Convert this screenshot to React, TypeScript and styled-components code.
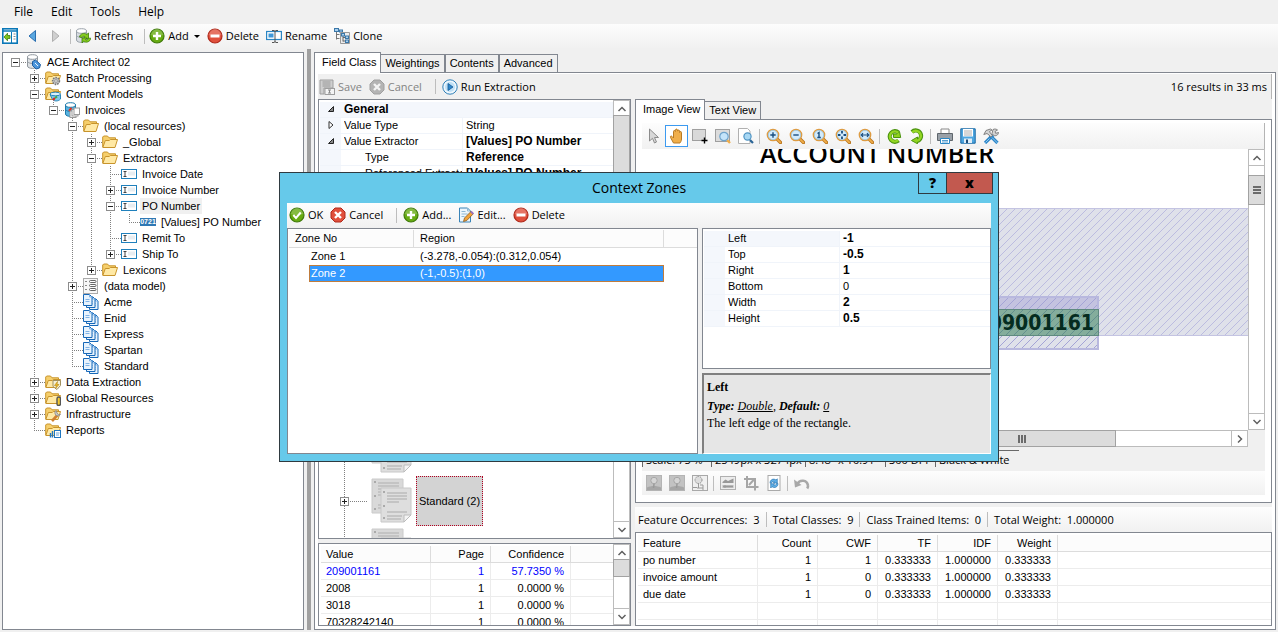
import React from "react";
import styled, { createGlobalStyle, css } from "styled-components";

const ui = '"Open Sans", "Noto Sans", sans-serif';
const grid = '"Liberation Sans", Arial, sans-serif';

const Global = createGlobalStyle`
  *, *::before, *::after { box-sizing: border-box; }
  html, body, #root { height: 100%; }
  body { margin: 0; background: #f0f0f0; color: #000; font: 11px/16px ${grid}; overflow: hidden; }
  button { font: inherit; color: inherit; background: none; border: 0; padding: 0; margin: 0; }
  table { border-collapse: separate; border-spacing: 0; table-layout: fixed; }
  th { font-weight: normal; text-align: left; }
  th, td { padding: 0; white-space: nowrap; overflow: hidden; }
`;

/* ---------- icons ---------- */

const Doc = ({ x = 0, y = 0 }: { x?: number; y?: number }) => (
  <g transform={`translate(${x} ${y})`}>
    <path d="M.5.5h6l2.5 2.5v8.500h-8.500z" fill="#e8f3fd" stroke="#1768b8" />
    <path d="M6.500.5v2.500h2.500M2.500 5.500h4M2.500 7.500h4" fill="none" stroke="#7fb2e5" />
  </g>
);
const FolderShape = () => (
  <>
    <path d="M.7 13V3l1-1h3.800l1.500 1.800h6.500V7" fill="#f6cf6c" stroke="#c8942c" />
    <path d="M.8 13.500l2.500-7h4l1-1h7.200l-2.500 8z" fill="#ffe9a5" stroke="#c8942c" />
  </>
);
const Lens = ({ children }: { children?: React.ReactNode }) => (
  <>
    <path d="M10.500 10.500l4 4" stroke="#b8741c" strokeWidth="3.400" strokeLinecap="round" />
    <path d="M10.800 10.800l3.500 3.500" stroke="#f0ae4a" strokeWidth="1.800" strokeLinecap="round" />
    <circle cx="7" cy="7" r="5.600" fill="#d3ebfb" stroke="#e09a3c" strokeWidth="1.500" />
    <circle cx="7" cy="7" r="4.700" fill="none" stroke="#8fc4ea" strokeWidth=".7" />
    <g stroke="#174d80" strokeWidth="1.400" fill="none">{children}</g>
  </>
);
const Disc = ({ fill, edge, children }: { fill: string; edge: string; children: React.ReactNode }) => (
  <>
    <circle cx="8" cy="8" r="7" fill={fill} stroke={edge} strokeWidth="1.200" />
    <path d="M2 7a6 6 0 0 1 12 0q-6 2.500-12 0z" fill="#fff" opacity=".2" />
    {children}
  </>
);
const Cylinder = ({ fill, edge }: { fill: string; edge: string }) => (
  <>
    <path d="M1.500 3v9c0 3.200 10 3.200 10 0V3" fill={fill} stroke={edge} />
    <ellipse cx="6.500" cy="3" rx="5" ry="2.300" fill="#fff" stroke={edge} />
    <path d="M1.500 7.500c1.500 2.600 8.500 2.600 10 0" fill="none" stroke={edge} />
  </>
);
const Picture = () => (
  <>
    <rect x=".5" y=".5" width="15" height="15" fill="#c2c2c2" stroke="#b4b4b4" />
    <path d="M1 12.500c4-2 10-2 14 0V15H1z" fill="#a6a6a6" />
    <path d="M7.500 13l.5-4" stroke="#999" strokeWidth="1.500" />
    <circle cx="8" cy="5.500" r="3.200" fill="#d5d5d5" stroke="#a6a6a6" />
  </>
);

const icons: Record<string, React.ReactNode> = {
  pane: (
    <>
      <rect x=".8" y=".8" width="14.400" height="14.400" fill="#fff" stroke="#0a78b8" strokeWidth="1.600" />
      <path d="M1 3h14" stroke="#0a78b8" strokeWidth="1.500" />
      <path d="M9.500 4v11" stroke="#0a78b8" />
      <path d="M11.500 6h2M11.500 8.500h2M11.500 11h2" stroke="#888" />
      <path d="M2 9l3.500-3.800v2.300H8v3H5.500v2.300z" fill="#7fc41c" stroke="#3f7d0c" strokeWidth=".8" />
    </>
  ),
  back: <path d="M10.500 2.500v11L4 8z" fill="#5aa7e0" stroke="#2b6fb0" />,
  forward: <path d="M4.500 2.500v11L11 8z" fill="#cfcfcf" stroke="#b0b0b0" />,
  refresh: (
    <>
      <Cylinder fill="#d8dde2" edge="#9aa2aa" />
      <path d="M4.500 9c.5-3.500 5-4.700 7.200-2.500L13.500 5v5.500H8.200L10 8.700c-1-.8-2.500-.4-3 .8z" fill="#86cc1e" stroke="#3c7d0a" strokeWidth=".8" />
      <path d="M15.800 10.200c-.5 3.800-5 5-7.200 3L7 15v-5h5l-1.600 1.700c1 .8 2.500.2 3-1.500z" fill="#86cc1e" stroke="#3c7d0a" strokeWidth=".8" />
    </>
  ),
  add: (
    <Disc fill="#67ab12" edge="#3f7a0a">
      <path d="M8 4v8M4 8h8" stroke="#fff" strokeWidth="2.400" />
    </Disc>
  ),
  remove: (
    <Disc fill="#e0503c" edge="#b02a1c">
      <path d="M3.500 8h9" stroke="#fff" strokeWidth="3" />
    </Disc>
  ),
  ok: (
    <Disc fill="#67ab12" edge="#3f7a0a">
      <path d="M4.300 8l2.700 3 4.700-5.500" stroke="#fff" strokeWidth="2" fill="none" />
    </Disc>
  ),
  cancel: (
    <>
      <path d="M5 1h6l4 4v6l-4 4H5l-4-4V5z" fill="#e0503c" stroke="#b02a1c" />
      <path d="M5 5l6 6M11 5l-6 6" stroke="#fff" strokeWidth="2.400" />
    </>
  ),
  cancelOff: (
    <>
      <path d="M5 1h6l4 4v6l-4 4H5l-4-4V5z" fill="#b4b4b4" stroke="#a0a0a0" />
      <path d="M5 5l6 6M11 5l-6 6" stroke="#f4f4f4" strokeWidth="2.400" />
    </>
  ),
  rename: (
    <>
      <rect x=".6" y="3.500" width="14.800" height="8" fill="#fff" stroke="#2b86c4" strokeWidth="1.200" />
      <rect x="2.500" y="5.500" width="5" height="4" fill="#3f97d8" />
      <path d="M6 2.500h2l1 .8 1-.8h2M6 14.500h2l1-.8 1 .8h2M9 3v11" stroke="#555" fill="none" />
    </>
  ),
  clone: (
    <>
      <path d="M2.500 3v8.500M2.500 6.500h3M2.500 10.500h3" stroke="#777" fill="none" />
      <rect x=".5" y=".5" width="4" height="3" fill="#a9d0ef" stroke="#3a77a8" />
      <rect x="5.500" y="2" width="3" height="2" fill="#a9d0ef" stroke="#3a77a8" />
      <path d="M6.500 4.500h9v11h-9z" fill="#ececec" stroke="#999" />
      <path d="M9 7v6.500M9 9.500h3M9 13h3" stroke="#666" fill="none" />
      <rect x="7.500" y="5.500" width="3" height="2.500" fill="#a9d0ef" stroke="#3a77a8" />
      <rect x="11.500" y="8" width="3" height="2.500" fill="#a9d0ef" stroke="#3a77a8" />
      <rect x="11.500" y="12" width="3" height="2.500" fill="#a9d0ef" stroke="#3a77a8" />
    </>
  ),
  edit: (
    <>
      <path d="M1.500 1h8l3 3v11h-11z" fill="#eef6fc" stroke="#3a84b8" />
      <path d="M9.500 1v3h3M3.500 4.500h4M3.500 7h6M3.500 9.500h3" fill="none" stroke="#8fb8d4" />
      <path d="M5.500 14.500l1-3.500 6.500-6.500 2.300 2.300L8.800 13.500z" fill="#f2a33a" stroke="#8c5a1c" strokeWidth=".8" />
      <path d="M13 4.500l2.300 2.300" stroke="#9a6fc0" strokeWidth="1.800" />
    </>
  ),
  saveOff: (
    <>
      <path d="M1 1h13v8H5v6H1z" fill="#cfcfcf" stroke="#9e9e9e" />
      <path d="M3.500 3h8M3.500 5h8M3.500 7h8" stroke="#999" />
      <rect x="6" y="9.500" width="9.500" height="6" fill="#f4f4f4" stroke="#9e9e9e" />
      <path d="M9 11h3M9 14h3M10.500 11v3" stroke="#8a8a8a" />
    </>
  ),
  run: (
    <>
      <circle cx="8" cy="8" r="7.200" fill="#eef7fd" stroke="#2f80b8" />
      <circle cx="8" cy="8" r="5" fill="#bfe0f6" />
      <path d="M6 4.500v7L11 8z" fill="#2d86cc" stroke="#145a94" strokeWidth=".8" />
    </>
  ),
  server: (
    <>
      <Cylinder fill="#dfe2e5" edge="#90979e" />
      <path d="M6.500 7.500l3-1.500 5 4.500-1 3.500-3.500 1-3.500-3.500z" fill="#4c96dc" stroke="#1d5da0" />
      <path d="M13 7l2.500 2.500M9 9l3 3" stroke="#e8f2fb" />
    </>
  ),
  folder: <FolderShape />,
  folderGear: (
    <>
      <FolderShape />
      <circle cx="11" cy="11" r="3.400" fill="#c4c4c4" stroke="#777" strokeWidth="1.600" strokeDasharray="1.500 1" />
      <circle cx="11" cy="11" r="1.300" fill="#fff" stroke="#777" strokeWidth=".7" />
    </>
  ),
  folderModel: (
    <>
      <FolderShape />
      <path d="M5 8.500h10.500v4.500c-2 2.500-6 2.500-8 .5z" fill="#7cc8ec" stroke="#2b86b8" />
      <ellipse cx="10.300" cy="8" rx="5.200" ry="1.800" fill="#d8f0fa" stroke="#2b86b8" />
      <path d="M8 14l1.800-2" stroke="#d22" strokeWidth="2" />
      <path d="M10 12l2-1.500" stroke="#4a4" strokeWidth="2" />
    </>
  ),
  folderShield: (
    <>
      <FolderShape />
      <path d="M8 6.500h7.500v5l-3.500 4-4-3z" fill="#f4f0d8" stroke="#a09060" />
      <path d="M12.500 7.500L9.500 11.500h2l-1 3 3.500-4h-2z" fill="#f4c020" stroke="#b08010" strokeWidth=".6" />
    </>
  ),
  folderClip: (
    <>
      <FolderShape />
      <rect x="12" y="7" width="3.500" height="8.500" rx="1.700" fill="#f4c92e" stroke="#555" strokeWidth="1.400" />
    </>
  ),
  folderWrench: (
    <>
      <FolderShape />
      <path d="M7 15l5.500-6" stroke="#d08030" strokeWidth="2.600" />
      <path d="M11 4.500a3 3 0 1 0 4.500 3.800l-2 .5-1.500-1.800z" fill="#ccc" stroke="#888" strokeWidth=".8" />
    </>
  ),
  folderReport: (
    <>
      <FolderShape />
      <rect x="9.500" y="8.500" width="6" height="7" fill="#fff" stroke="#1f76c0" />
      <path d="M5.500 11v4.500M7.500 9v6.500" stroke="#1f76c0" strokeWidth="1.400" />
      <path d="M11 11h3.500M11 13h3" stroke="#6aa8dc" />
    </>
  ),
  model: (
    <>
      <Cylinder fill="#59b3e0" edge="#1c7aac" />
      <path d="M5 9l2.500-3" stroke="#e03020" strokeWidth="2" />
      <rect x="6" y="9" width="6" height="6.500" fill="#fff" stroke="#999" />
      <rect x="8" y="7.500" width="6" height="6.500" fill="#fff" stroke="#999" />
      <rect x="10" y="6" width="5.500" height="6.500" fill="#fff" stroke="#999" />
    </>
  ),
  field: (
    <>
      <rect x=".5" y="3.500" width="15" height="9" fill="#fff" stroke="#1f80bc" />
      <rect x="7" y="5.500" width="7" height="4" fill="#e8edf1" />
      <path d="M2.500 5.500h3M2.500 10.500h3M4 5.500v5" stroke="#444" />
    </>
  ),
  pages: (
    <>
      <Doc x={6} y={4} />
      <Doc x={3} y={2} />
      <Doc />
    </>
  ),
  dataModel: (
    <>
      <rect x=".5" y=".5" width="14" height="15" fill="#f7f7f7" stroke="#aaa" />
      <path d="M2 3.500h2M2 7.500h2M2 11.500h2" stroke="#888" />
      <rect x="6.500" y="2.500" width="6.500" height="2" rx="1" fill="#fff" stroke="#666" />
      <rect x="6.500" y="6.500" width="6.500" height="2" rx="1" fill="#fff" stroke="#666" />
      <rect x="6.500" y="10.500" width="6.500" height="2" rx="1" fill="#fff" stroke="#666" />
    </>
  ),
  pointer: <path d="M3.500 1v12l3-2.700 2 4.700 2-1-2-4.500h4z" fill="#d8d8d8" stroke="#8c8c8c" />,
  hand: (
    <path
      d="M4.500 15L1.500 9.500c-.6-1.300.8-2 1.700-.9L4.500 10V3.500c0-1.400 1.800-1.400 1.900 0V2.200c.1-1.500 2-1.500 2.100 0v.9c.1-1.400 2-1.400 2.100 0v1.400c.1-1.300 1.900-1.300 1.900 0V11c0 2-1 3-1.500 4z"
      fill="#f0ae4a" stroke="#b87a24"
    />
  ),
  select: (
    <>
      <rect x=".5" y="1.500" width="13" height="11" fill="#d9d9d9" stroke="#555" strokeDasharray="1 1" />
      <path d="M9.500 12.500h6M12.500 9.500v6" stroke="#000" strokeWidth="1.400" />
    </>
  ),
  zoomArea: (
    <>
      <rect x=".5" y="1.500" width="14" height="12" fill="#dcdcdc" stroke="#555" strokeDasharray="1 1" />
      <path d="M12 12l3 3" stroke="#f0ae4a" strokeWidth="2.400" />
      <circle cx="9" cy="8.500" r="4.200" fill="#c4e4fa" stroke="#6fa4cc" strokeWidth="1.200" />
    </>
  ),
  zoomPage: (
    <>
      <path d="M.5.5h9l2.500 2.500v12.500H.5z" fill="#fff" stroke="#b0b0b0" />
      <path d="M12 12l3 3" stroke="#2a6496" strokeWidth="2.200" />
      <circle cx="9.500" cy="8.500" r="3.600" fill="#a8d8f4" stroke="#4f94c4" strokeWidth="1.200" />
    </>
  ),
  zoomIn: <Lens><path d="M4.300 7h5.400M7 4.300v5.400" /></Lens>,
  zoomOut: <Lens><path d="M4.300 7h5.400" /></Lens>,
  zoomOne: <Lens><path d="M5.500 5.500L7 4.500v5M5.300 9.500h3.500" /></Lens>,
  zoomFit: <Lens><path d="M3 7h2.500M8.500 7H11M7 3v2.500M7 8.500V11" strokeWidth="1.800" /></Lens>,
  zoomWidth: <Lens><path d="M3.500 7h7M5 5.200L3.300 7 5 8.800M9 5.200L10.700 7 9 8.800" strokeWidth="1.200" /></Lens>,
  rotateLeft: (
    <>
      <path d="M12.500 12.500a5.300 5.300 0 1 1 0-8" fill="none" stroke="#4b930f" strokeWidth="4.200" />
      <path d="M7.500 9.500V6h3l3-2.500 1.200 6z" fill="#8ed21e" stroke="#4b930f" />
      <path d="M12.200 12.200a5 5 0 1 1 0-7.500" fill="none" stroke="#93d624" strokeWidth="2.400" />
    </>
  ),
  rotateRight: (
    <>
      <path d="M3 4a5.300 5.300 0 1 1 4.500 9" fill="none" stroke="#4b930f" strokeWidth="4.200" />
      <path d="M8.500 9v6.800L2.500 12.500z" fill="#8ed21e" stroke="#4b930f" />
      <path d="M3.300 4.300a5 5 0 1 1 4.500 8.400" fill="none" stroke="#93d624" strokeWidth="2.400" />
    </>
  ),
  print: (
    <>
      <path d="M4 1h8v5H4z" fill="#fff" stroke="#888" />
      <path d="M.5 5.500h15v7H.5z" fill="#9aa1a8" stroke="#5f666c" />
      <path d="M3.500 10.500h9v5h-9z" fill="#fff" stroke="#2b86c4" />
      <path d="M5 12.500h6M5 14h6" stroke="#2b86c4" strokeWidth=".8" />
    </>
  ),
  save: (
    <>
      <path d="M.8.8h14.400v14.400H.8z" fill="#4da6e0" stroke="#1767a4" />
      <path d="M3 1h10v7.500H3z" fill="#fff" />
      <path d="M4 3h8M4 5h8M4 7h8" stroke="#999" strokeWidth=".8" />
      <path d="M4 10.500h8V15H4z" fill="#e0eef8" />
      <path d="M6 11.500h2V15H6z" fill="#1d4d78" />
    </>
  ),
  tools: (
    <>
      <path d="M2 15l8-8" stroke="#2c86c8" strokeWidth="3.200" />
      <path d="M14.500 15L7 7.500" stroke="#2c86c8" strokeWidth="3.200" />
      <path d="M14.500 15L9 9.500M2.500 14.500l4-4" stroke="#8ecbf2" />
      <path d="M.8 6.500L3 2.500l4.500-1.500 1.500 1-2.500 1.500 1 1.800 2 2.200-1.800 1.500L6 7 4 5.500z" fill="#d4d4d4" stroke="#777" strokeWidth=".9" />
      <path d="M10 1.500c2-1 3.800-.2 4.500.5l-2.500 1.500.7 1.800 2.800-.8c0 2.500-3 4-5 2.800L9 5.500z" fill="#d4d4d4" stroke="#777" strokeWidth=".9" />
    </>
  ),
  picture: <Picture />,
  pictureOutline: (
    <>
      <rect x=".5" y=".5" width="15" height="15" fill="#f0f0f0" stroke="#a8a8a8" />
      <circle cx="6.500" cy="5" r="3.500" fill="#ddd" stroke="#888" strokeDasharray="1.500 1" />
      <path d="M6.500 8v5M1 12.500h4M5 13h6v2M8 10h3v3" stroke="#999" fill="none" />
    </>
  ),
  levels: (
    <>
      <rect x=".5" y="1.500" width="15" height="13" fill="#ededed" stroke="#b0b0b0" />
      <path d="M2.500 7l3-2.500L8 6l5.500-2.500V8h-11z" fill="#999" />
      <path d="M2.500 10h11v3h-11z" fill="#b8b8b8" />
      <path d="M3 11.500h10M5 10v3" stroke="#999" />
    </>
  ),
  crop: <path d="M4 1v11h11.500M1 4h11v11.500M6 10l5-5.500" fill="none" stroke="#a6a6a6" strokeWidth="2" />,
  reload: (
    <>
      <rect x="2" y=".5" width="12" height="15" fill="#fff" stroke="#aaa" />
      <path d="M4 8.200C4 4.500 7.500 3 10 5l1.300-1.200V8H7.200l1.300-1.300C7 6 5.800 6.800 5.600 8.200z" fill="#5fb0e8" stroke="#1d6aa8" strokeWidth=".6" />
      <path d="M12 8.500c0 3.700-3.500 5-6 3.200l-1.300 1.300V8.800h4.100L7.500 10c1.500.8 2.700 0 2.900-1.500z" fill="#5fb0e8" stroke="#1d6aa8" strokeWidth=".6" />
    </>
  ),
  undo: (
    <>
      <path d="M3.500 9c2-4.500 9.500-4.500 10.500 1.500.2 1-.2 2-.8 3" fill="none" stroke="#a8a8a8" strokeWidth="2.600" />
      <path d="M0 4.500l1 8 6.500-2.500z" fill="#a8a8a8" />
    </>
  ),
};

const Svg = styled.svg`
  width: 16px;
  height: 16px;
  flex: none;
  display: block;
`;
const NumberBadge = styled.span`
  width: 16px;
  height: 8px;
  flex: none;
  overflow: hidden;
  background: #2f78b4;
  color: #fff;
  font: bold 7px/8px ${grid};
  text-align: center;
`;
const Icon = ({ name }: { name: string }) =>
  name === "digits" ? (
    <NumberBadge>0721</NumberBadge>
  ) : (
    <Svg viewBox="0 0 16 16" aria-hidden="true">{icons[name]}</Svg>
  );

/* ---------- shared parts ---------- */

const Shell = styled.div`
  height: 100%;
  display: flex;
  flex-direction: column;
`;
const MenuBar = styled.nav`
  display: flex;
  height: 24px;
  padding-left: 5px;
  font: 12px/24px ${ui};
`;
const MenuItem = styled.button`
  padding: 0 9px;
`;
const Bar = styled.div<{ $flat?: boolean; $h?: number }>`
  display: flex;
  align-items: center;
  flex: none;
  height: ${(p) => p.$h ?? 24}px;
  font: 11px/16px ${ui};
  background: ${(p) => (p.$flat ? "#f0f0f0" : "linear-gradient(#fdfdfd, #f1f1f1)")};
`;
const MainBar = styled(Bar)`
  padding-left: 2px;
`;
const ToolButton = styled.button<{ $w?: number }>`
  display: flex;
  align-items: center;
  gap: 3px;
  height: 22px;
  width: ${(p) => (p.$w ? `${p.$w}px` : "auto")};
  padding-right: 7px;
  white-space: nowrap;
  &:disabled { color: #838383; }
`;
const Divider = styled.span<{ $gap?: number }>`
  width: 1px;
  height: 15px;
  margin: 0 ${(p) => p.$gap ?? 6}px;
  background: #bdbdbd;
  flex: none;
`;
const Caret = styled.i`
  border: 3px solid transparent;
  border-top-color: #000;
  border-bottom: 0;
  margin-left: 2px;
`;
const IconButton = styled.button<{ $on?: boolean }>`
  width: 23px;
  height: 22px;
  display: grid;
  place-items: center;
  flex: none;
  ${(p) => p.$on && css`border: 1px solid #3c9af0; background: #fff;`}
`;

/* ---------- scroll bars ---------- */

const Track = styled.div<{ $across?: boolean }>`
  display: flex;
  flex: none;
  flex-direction: ${(p) => (p.$across ? "row" : "column")};
  ${(p) => (p.$across ? "height: 17px;" : "width: 17px;")}
  background: #fff;
  border: 1px solid #bcbcbc;
`;
const Arrow = styled.button`
  width: 15px;
  height: 15px;
  flex: none;
  display: grid;
  place-items: center;
  outline: 1px solid #bcbcbc;
  background: #fff;
`;
const Lane = styled.div<{ $across?: boolean }>`
  flex: 1;
  min-height: 0;
  min-width: 0;
  display: flex;
  flex-direction: ${(p) => (p.$across ? "row" : "column")};
`;
const Thumb = styled.div<{ $size: string; $start: number; $across?: boolean }>`
  flex: none;
  display: grid;
  place-items: center;
  background: #dcdcdc;
  outline: 1px solid #a2a2a2;
  ${(p) =>
    p.$across
      ? css`width: ${p.$size}; margin-left: ${p.$start}px;`
      : css`height: ${p.$size}; margin-top: ${p.$start}px;`}
`;
const Grip = styled.i<{ $across?: boolean }>`
  width: 8px;
  height: 8px;
  background: repeating-linear-gradient(${(p) => (p.$across ? "90deg" : "180deg")}, #6b6b6b 0 2px, transparent 2px 3px);
`;
const turns = { up: 0, right: 90, down: 180, left: 270 };
const ScrollArrow = ({ dir }: { dir: keyof typeof turns }) => (
  <Arrow aria-label={`Scroll ${dir}`}>
    <svg width="10" height="10" viewBox="0 0 10 10">
      <path d="M1.500 7L5 3.500 8.500 7" fill="none" stroke="#606060" strokeWidth="1.500" transform={`rotate(${turns[dir]} 5 5)`} />
    </svg>
  </Arrow>
);
const ScrollBar = (p: { across?: boolean; start?: number; size?: string; grip?: boolean }) => (
  <Track $across={p.across}>
    <ScrollArrow dir={p.across ? "left" : "up"} />
    <Lane $across={p.across}>
      {p.size && (
        <Thumb $across={p.across} $start={p.start ?? 0} $size={p.size}>
          {p.grip && <Grip $across={p.across} />}
        </Thumb>
      )}
    </Lane>
    <ScrollArrow dir={p.across ? "right" : "down"} />
  </Track>
);

/* ---------- project tree ---------- */

type Node = { label: string; icon: string; open?: boolean; selected?: boolean; kids?: Node[] };
const root: Node = {
  label: "ACE Architect 02", icon: "server", open: true,
  kids: [
    { label: "Batch Processing", icon: "folderGear", kids: [] },
    {
      label: "Content Models", icon: "folderModel", open: true,
      kids: [
        {
          label: "Invoices", icon: "model", open: true,
          kids: [
            {
              label: "(local resources)", icon: "folder", open: true,
              kids: [
                { label: "_Global", icon: "folder", kids: [] },
                {
                  label: "Extractors", icon: "folder", open: true,
                  kids: [
                    { label: "Invoice Date", icon: "field" },
                    { label: "Invoice Number", icon: "field", kids: [] },
                    {
                      label: "PO Number", icon: "field", open: true, selected: true,
                      kids: [{ label: "[Values] PO Number", icon: "digits" }],
                    },
                    { label: "Remit To", icon: "field" },
                    { label: "Ship To", icon: "field", kids: [] },
                  ],
                },
                { label: "Lexicons", icon: "folder", kids: [] },
              ],
            },
            { label: "(data model)", icon: "dataModel", kids: [] },
            ...["Acme", "Enid", "Express", "Spartan", "Standard"].map((label) => ({ label, icon: "pages" })),
          ],
        },
      ],
    },
    { label: "Data Extraction", icon: "folderShield", kids: [] },
    { label: "Global Resources", icon: "folderClip", kids: [] },
    { label: "Infrastructure", icon: "folderWrench", kids: [] },
    { label: "Reports", icon: "folderReport" },
  ],
};

const TreePane = styled.section`
  background: #fff;
  border: 1px solid #828790;
  padding: 1px 0 0 3px;
  overflow: hidden;
`;
const TreeRow = styled.div`
  display: flex;
  align-items: center;
  height: 16px;
`;
const dotsDown = "repeating-linear-gradient(#808080 0 1px, transparent 1px 2px)";
const dotsAcross = "repeating-linear-gradient(90deg, #808080 0 1px, transparent 1px 2px)";
const Guide = styled.span<{ $line?: "full" | "half" | "none"; $stub?: boolean }>`
  width: ${(p) => (p.$stub ? 20 : 19)}px;
  padding-right: ${(p) => (p.$stub ? 1 : 0)}px;
  height: 16px;
  flex: none;
  display: grid;
  place-items: center;
  background:
    ${(p) => (p.$stub ? dotsAcross : "none")} 9px 8px / 11px 1px no-repeat,
    ${(p) => (p.$line && p.$line !== "none" ? dotsDown : "none")} 9px 0 / 1px ${(p) => (p.$line === "half" ? 8 : 16)}px no-repeat;
`;
const Expander = styled.button`
  width: 9px;
  height: 9px;
  display: grid;
  place-items: center;
  border: 1px solid #8c8c8c;
  background: #fff;
`;
const TreeLabel = styled.span<{ $selected?: boolean }>`
  margin-left: 3px;
  padding: 0 2px;
  background: ${(p) => (p.$selected ? "#f0f0f0" : "none")};
  white-space: nowrap;
`;
const PlusMinus = ({ open }: { open?: boolean }) => (
  <Expander aria-label={open ? "Collapse" : "Expand"}>
    <svg width="5" height="5" viewBox="0 0 5 5">
      <path d={open ? "M0 2.500h5" : "M0 2.500h5M2.500 0v5"} stroke="#222" />
    </svg>
  </Expander>
);
const Branch = ({ node, trail, last, top }: { node: Node; trail: boolean[]; last: boolean; top?: boolean }) => (
  <>
    <TreeRow role="treeitem" aria-selected={!!node.selected}>
      {trail.map((on, i) => <Guide key={i} $line={on ? "full" : "none"} />)}
      <Guide $stub $line={top ? "none" : last ? "half" : "full"}>
        {node.kids && <PlusMinus open={node.open} />}
      </Guide>
      <Icon name={node.icon} />
      <TreeLabel $selected={node.selected}>{node.label}</TreeLabel>
    </TreeRow>
    {node.open && node.kids?.map((kid, i, all) => (
      <Branch key={kid.label} node={kid} trail={[...trail, !last]} last={i === all.length - 1} />
    ))}
  </>
);

/* ---------- work area ---------- */

const Body = styled.main`
  flex: 1;
  min-height: 0;
  display: grid;
  grid-template-columns: 302px 4px 1fr;
  gap: 3px;
  padding: 0 2px 2px;
  > :first-child, > :last-child { margin-top: 4px; }
`;
const Splitter = styled.div`
  background: #a0a0a0;
  margin-top: 1px;
`;
const TabBox = styled.section`
  display: flex;
  flex: 1;
  flex-direction: column;
  min-width: 0;
  min-height: 0;
`;
const TabStrip = styled.div`
  display: flex;
  align-items: flex-end;
  height: 20px;
  flex: none;
  position: relative;
`;
const Tab = styled.button<{ $active?: boolean }>`
  height: ${(p) => (p.$active ? 21 : 18)}px;
  margin-bottom: ${(p) => (p.$active ? -1 : 0)}px;
  padding: ${(p) => (p.$active ? "0 4px 2px 7px" : "0 4px")};
  border: 1px solid #828790;
  border-bottom: 0;
  background: ${(p) => (p.$active ? "#fff" : "#f0f0f0")};
  line-height: 17px;
  white-space: nowrap;
  & + & { border-left-width: 0; }
  & + & + & { border-left-width: 1px; }
`;
const TabPage = styled.div<{ $pad: string }>`
  flex: 1;
  min-height: 0;
  display: flex;
  flex-direction: column;
  background: #fff;
  border: 1px solid #828790;
  padding: ${(p) => p.$pad};
`;
const FieldBar = styled(Bar)`
  padding: 0 4px 0 1px;
  border-right: 1px solid #b4b4b4;
`;
const Spacer = styled.span`
  flex: 1;
`;
const Columns = styled.div`
  flex: 1;
  min-height: 0;
  display: grid;
  grid-template-columns: 313px 1fr;
  gap: 4px;
  background: #f0f0f0;
`;
const Column = styled.div`
  display: flex;
  flex-direction: column;
  min-height: 0;
  min-width: 0;
  gap: 4px;
`;
const Box = styled.div<{ $h?: number }>`
  display: flex;
  justify-content: space-between;
  background: #fff;
  border: 1px solid #828790;
  overflow: hidden;
  ${(p) => (p.$h ? `flex: none; height: ${p.$h}px;` : "flex: 1; min-height: 0;")}
`;
const Scroller = styled.div<{ $pad?: string }>`
  flex: 1;
  min-width: 0;
  overflow: hidden;
  padding: ${(p) => p.$pad ?? "0"};
`;

const PropTable = styled.table`
  width: 100%;
  tr { height: 16px; }
  td, th { border-bottom: 1px solid #f0f4fa; line-height: 15px; height: 16px; }
  th { border-right: 1px solid #f0f4fa; padding-left: 3px; }
  td:first-child { background: #f4f7fc; text-align: center; }
  td:last-child { padding-left: 3px; }
`;
const PropName = styled.th<{ $indent?: boolean; $lit?: boolean }>`
  ${(p) => p.$lit && "background: #f4f7fc;"}
  span { display: block; overflow: hidden; padding-left: ${(p) => (p.$indent ? 21 : 0)}px; }
`;
const PropValue = styled.td<{ $bold?: boolean }>`
  font-weight: ${(p) => (p.$bold ? "bold" : "normal")};
  font-size: ${(p) => (p.$bold ? 12 : 11)}px;
`;
const GroupName = styled.th`
  && { font: bold 12px/15px ${grid}; background: #f4f7fc; }
`;
const Twisty = ({ open }: { open?: boolean }) => (
  <svg width="8" height="8" viewBox="0 0 8 8" aria-hidden="true">
    {open ? <path d="M6.500 1.500v5h-5z" fill="#888" stroke="#222" /> : <path d="M2 .5v7L6 4z" fill="#fff" stroke="#333" />}
  </svg>
);

const DataTable = styled.table`
  width: 100%;
  height: 0;
  line-height: 16px;
  tr { height: 17px; }
  th, td { height: 17px; border-right: 1px solid #ececec; border-bottom: 1px solid #ececec; text-align: right; padding: 0 6px; }
  thead th { border-color: #dcdcdc; background: #fcfcfc; }
  th:first-child, td:first-child { text-align: left; padding-left: 5px; }
  th:last-child, td:last-child { border-right: 0; }
`;
const ValueRow = styled.tr<{ $hot?: boolean }>`
  color: ${(p) => (p.$hot ? "#0000ff" : "#000")};
`;

const ClassRow = styled.div`
  display: flex;
  align-items: center;
  height: 50px;
  padding-left: 16px;
`;
const ClassGuide = styled.span`
  width: 36px;
  height: 50px;
  display: flex;
  align-items: center;
  padding-left: 5px;
  background:
    ${dotsDown} 9px 0 / 1px 50px no-repeat,
    ${dotsAcross} 9px 25px / 24px 1px no-repeat;
`;
const ClassName = styled.span`
  height: 50px;
  width: 67px;
  margin-left: 4px;
  border: 1px dotted #b00020;
  background: #d3d3d3;
  line-height: 48px;
  text-align: center;
  white-space: nowrap;
`;
const Papers = () => (
  <svg width="41" height="46" viewBox="0 0 41 46" aria-hidden="true">
    <path d="M1 1h31v34H1z" fill="#d9d9d9" stroke="#cacaca" />
    <path d="M7 5h21M7 8h21M7 11h14M7 14h21M7 17h21M7 27h21M7 30h21" stroke="#c4c4c4" strokeWidth="2" />
    <path d="M10 10h30v27l-7 7H10z" fill="#dedede" stroke="#c8c8c8" />
    <path d="M33 44v-7h7z" fill="#f4f4f4" stroke="#bcbcbc" />
    <path d="M16 15h20M16 18h20M16 21h20M16 24h12M16 34h20M16 38h15M16 41h14" stroke="#bcbcbc" strokeWidth="1.500" />
    <path d="M3 4h2M3 18h2M3 31h2M12 14h2M12 28h2M12 40h2" stroke="#aaa" strokeWidth="2" />
  </svg>
);

/* ---------- image view ---------- */

const ViewBar = styled(Bar)`
  height: 26px;
  margin-top: 3px;
  border-right: 1px solid #b4b4b4;
`;
const View = styled.div`
  flex: 1;
  min-height: 0;
  display: grid;
  grid-template: 1fr 17px / 1fr 17px;
  background: #f0f0f0;
`;
const Canvas = styled.div`
  position: relative;
  overflow: hidden;
  background: #fff;
`;
const Heading = styled.div`
  position: absolute;
  left: 118px;
  top: -12px;
  font: 600 25px/32px ${ui};
  white-space: nowrap;
`;
const stripes = (c: string) =>
  `linear-gradient(135deg, transparent 44%, ${c} 44% 56%, transparent 56%) 0 0 / 8px 8px`;
const SearchZone = styled.div`
  position: absolute;
  left: 60px;
  right: 0;
  top: 59px;
  height: 128px;
  border: 1px solid #c4c4e2;
  border-right: 0;
  background: ${stripes("#bcbce0")}, #dfe1ea;
`;
const MatchZone = styled.div`
  position: absolute;
  left: 260px;
  width: 197px;
  top: 147px;
  height: 54px;
  border: 2px solid #b8b8de;
  background: ${stripes("#a4a4d6")}, linear-gradient(#c4c3e0 38px, #dfe1ea 38px);
`;
const Match = styled.mark`
  position: absolute;
  left: 300px;
  width: 157px;
  top: 160px;
  height: 27px;
  padding-right: 4px;
  border: 1px solid #5f8a80;
  background: ${stripes("#64908f")}, #84ad9c;
  color: #052c20;
  font: bold 21px/26px "DejaVu Sans Condensed", "DejaVu Sans", sans-serif;
  text-align: right;
`;
const StatusLine = styled.div`
  display: flex;
  height: 17px;
  margin: 3px 0 4px;
  flex: none;
  font: 11px/17px ${ui};
`;
const StatusCell = styled.span<{ $w: number }>`
  width: ${(p) => p.$w}px;
  padding-left: 3px;
  border-left: 1px solid #696969;
  border-top: 1px solid #696969;
  white-space: nowrap;
`;
const Lower = styled.div`
  background: #f0f0f0;
  flex: none;
`;
const Stats = styled(Bar)`
  padding-left: 3px;
  font-size: 11px;
  white-space: pre;
`;

/* ---------- dialog ---------- */

const Dialog = styled.section`
  position: absolute;
  left: 279px;
  top: 172px;
  width: 720px;
  height: 290px;
  display: flex;
  flex-direction: column;
  padding: 0 7px 7px;
  border: 1px solid #2f3a40;
  background: #66c9ea;
`;
const TitleRow = styled.header`
  position: relative;
  height: 30px;
  flex: none;
  text-align: center;
`;
const Title = styled.h1`
  margin: 0;
  font: 14px/30px ${ui};
`;
const WindowButtons = styled.div`
  position: absolute;
  right: -2px;
  top: 0;
  display: flex;
  border: 1px solid #2f3a40;
  border-top: 0;
`;
const WindowButton = styled.button<{ $close?: boolean }>`
  width: ${(p) => (p.$close ? 46 : 27)}px;
  height: 20px;
  font: 800 14px/20px ${ui};
  background: ${(p) => (p.$close ? "#c2594f" : "transparent")};
  border-left: ${(p) => (p.$close ? "1px solid #2f3a40" : "0")};
`;
const DialogBody = styled.div`
  flex: 1;
  min-height: 0;
  display: flex;
  flex-direction: column;
  background: #f0f0f0;
`;
const DialogBar = styled(Bar)`
  padding-left: 2px;
  margin-bottom: 1px;
`;
const DialogColumns = styled.div`
  flex: 1;
  min-height: 0;
  display: grid;
  grid-template-columns: 411px 1fr;
  gap: 4px;
`;
const ZoneTable = styled.table`
  width: 100%;
  height: 0;
  line-height: 17px;
  thead th { height: 17px; padding-left: 6px; background: #fcfcfc; border-right: 1px solid #dcdcdc; border-bottom: 1px solid #dcdcdc; }
  thead th:last-child { border-right: 0; }
  td { height: 17px; }
  td:nth-child(2) { padding-left: 2px; }
  td:nth-child(3) { padding-left: 6px; }
`;
const ZoneRow = styled.tr<{ $selected?: boolean }>`
  ${(p) =>
    p.$selected &&
    css`
      color: #fff;
      line-height: 15px;
      td:nth-child(2), td:nth-child(3) { background: #3399ff; border: 1px solid #c07c3c; }
      td:nth-child(2) { border-right: 0; padding-left: 1px; }
      td:nth-child(3) { border-left: 0; }
    `}
`;
const Help = styled.div`
  flex: none;
  height: 81px;
  padding: 4px 3px;
  border: 1px solid #fff;
  border-top: 2px solid #808080;
  border-left: 2px solid #808080;
  background: #e6e6e6;
  font: 12px/17px "Liberation Serif", "Times New Roman", serif;
  p { margin: 0; }
  p:first-child { margin-bottom: 2px; }
`;

/* ---------- data ---------- */

const mainProps = [
  { name: "Value Type", value: "String", mark: "closed" },
  { name: "Value Extractor", value: "[Values] PO Number", mark: "open", bold: true },
  { name: "Type", value: "Reference", bold: true, indent: true },
  { name: "Referenced Extractor", value: "[Values] PO Number", bold: true, indent: true },
];
const zoneProps = [
  ["Left", "-1"], ["Top", "-0.5"], ["Right", "1"], ["Bottom", "0"], ["Width", "2"], ["Height", "0.5"],
];
const values = [
  ["209001161", "57.7350 %"], ["2008", "0.0000 %"], ["3018", "0.0000 %"], ["70328242140", "0.0000 %"],
];
const features = [
  ["po number", "1", "1", "0.333333", "1.000000", "0.333333"],
  ["invoice amount", "1", "0", "0.333333", "1.000000", "0.333333"],
  ["due date", "1", "0", "0.333333", "1.000000", "0.333333"],
  ["", "", "", "", "", ""],
  ["", "", "", "", "", ""],
];
const viewTools = [
  "pointer", "hand", "select", "zoomArea", "zoomPage", "|", "zoomIn", "zoomOut", "zoomOne", "zoomFit", "zoomWidth",
  "|", "rotateLeft", "rotateRight", "|", "print", "save", "tools",
];
const editTools = ["picture", "picture", "pictureOutline", "|", "levels", "crop", "reload", "|", "undo"];

const Tools = ({ names, on }: { names: string[]; on?: string }) => (
  <>
    {names.map((n, i) =>
      n === "|" ? (
        <Divider key={i} $gap={2} />
      ) : (
        <IconButton key={i} aria-label={n} $on={n === on}><Icon name={n} /></IconButton>
      )
    )}
  </>
);

export default function App() {
  return (
    <Shell>
      <Global />
      <MenuBar>
        {["File", "Edit", "Tools", "Help"].map((m) => <MenuItem key={m}>{m}</MenuItem>)}
      </MenuBar>
      <MainBar>
        <ToolButton $w={23} aria-label="Toggle pane"><Icon name="pane" /></ToolButton>
        <ToolButton $w={23} aria-label="Back"><Icon name="back" /></ToolButton>
        <ToolButton $w={18} aria-label="Forward"><Icon name="forward" /></ToolButton>
        <Divider $gap={4} />
        <ToolButton><Icon name="refresh" />Refresh</ToolButton>
        <Divider $gap={4} />
        <ToolButton><Icon name="add" />Add <Caret /></ToolButton>
        <ToolButton><Icon name="remove" />Delete</ToolButton>
        <ToolButton><Icon name="rename" />Rename</ToolButton>
        <ToolButton><Icon name="clone" />Clone</ToolButton>
      </MainBar>
      <Body>
        <TreePane role="tree">
          <Branch node={root} trail={[]} last top />
        </TreePane>
        <Splitter />
        <TabBox>
          <TabStrip>
            <Tab $active>Field Class</Tab>
            <Tab>Weightings</Tab>
            <Tab>Contents</Tab>
            <Tab>Advanced</Tab>
          </TabStrip>
          <TabPage $pad="1px 3px 3px">
            <FieldBar $flat $h={25}>
              <ToolButton disabled><Icon name="saveOff" />Save</ToolButton>
              <ToolButton disabled><Icon name="cancelOff" />Cancel</ToolButton>
              <Divider />
              <ToolButton><Icon name="run" />Run Extraction</ToolButton>
              <Spacer />
              <span>16 results in 33 ms</span>
            </FieldBar>
            <Columns>
              <Column>
                <Box>
                  <Scroller $pad="2px 0 0 1px">
                    <PropTable>
                      <colgroup><col width="21" /><col width="122" /><col /></colgroup>
                      <tbody>
                        <tr>
                          <td><Twisty open /></td>
                          <GroupName colSpan={2}>General</GroupName>
                        </tr>
                        {mainProps.map((p) => (
                          <tr key={p.name}>
                            <td>{p.mark && <Twisty open={p.mark === "open"} />}</td>
                            <PropName $indent={p.indent}><span>{p.name}</span></PropName>
                            <PropValue $bold={p.bold}>{p.value}</PropValue>
                          </tr>
                        ))}
                      </tbody>
                    </PropTable>
                  </Scroller>
                  <ScrollBar size="60%" />
                </Box>
                <Box $h={114}>
                  <Scroller>
                    {["Spartan (1)", "Standard (2)", "Acme (1)"].map((c) => (
                      <ClassRow key={c}>
                        <ClassGuide><PlusMinus /></ClassGuide>
                        <Papers />
                        {c.startsWith("Standard") && <ClassName>{c}</ClassName>}
                      </ClassRow>
                    ))}
                  </Scroller>
                  <ScrollBar />
                </Box>
                <Box $h={83}>
                  <Scroller $pad="2px 0 0 2px">
                    <DataTable>
                      <colgroup>
                        <col width="110" /><col width="60" /><col width="80" /><col />
                      </colgroup>
                      <thead>
                        <tr><th>Value</th><th>Page</th><th>Confidence</th><th /></tr>
                      </thead>
                      <tbody>
                        {values.map(([v, c], i) => (
                          <ValueRow key={v} $hot={i === 0}><td>{v}</td><td>1</td><td>{c}</td><td /></ValueRow>
                        ))}
                      </tbody>
                    </DataTable>
                  </Scroller>
                  <ScrollBar size="16px" />
                </Box>
              </Column>
              <Column>
                <TabBox>
                  <TabStrip>
                    <Tab $active>Image View</Tab>
                    <Tab>Text View</Tab>
                  </TabStrip>
                  <TabPage $pad="0 6px 7px 6px">
                    <ViewBar><Tools names={viewTools} on="hand" /></ViewBar>
                    <View>
                      <Canvas>
                        <Heading>ACCOUNT NUMBER</Heading>
                        <SearchZone />
                        <MatchZone />
                        <Match>209001161</Match>
                      </Canvas>
                      <ScrollBar start={11} size="28px" grip />
                      <ScrollBar across start={270} size="187px" grip />
                    </View>
                    <Lower>
                      <StatusLine>
                        <StatusCell $w={69}>Scale: 75 %</StatusCell>
                        <StatusCell $w={94}>2549px x 3274px</StatusCell>
                        <StatusCell $w={80}>8.48" x 10.91"</StatusCell>
                        <StatusCell $w={50}>300 DPI</StatusCell>
                        <StatusCell $w={84}>Black &amp; White</StatusCell>
                      </StatusLine>
                      <Bar><Tools names={editTools} /></Bar>
                    </Lower>
                  </TabPage>
                </TabBox>
                <div>
                  <Stats $h={25}>
                    Feature Occurrences:  3<Divider />Total Classes:  9<Divider />Class Trained Items:  0<Divider />Total Weight:  1.000000
                  </Stats>
                  <Box $h={94}>
                    <Scroller $pad="2px 0 0 2px">
                      <DataTable>
                        <colgroup>
                          <col width="120" /><col width="60" /><col width="60" /><col width="60" /><col width="60" /><col width="60" /><col />
                        </colgroup>
                        <thead>
                          <tr>
                            <th>Feature</th><th>Count</th><th>CWF</th><th>TF</th><th>IDF</th><th>Weight</th><th />
                          </tr>
                        </thead>
                        <tbody>
                          {features.map((r, i) => (
                            <tr key={i}>{r.map((c, j) => <td key={j}>{c}</td>)}<td /></tr>
                          ))}
                        </tbody>
                      </DataTable>
                    </Scroller>
                  </Box>
                </div>
              </Column>
            </Columns>
          </TabPage>
        </TabBox>
      </Body>
      <Dialog role="dialog" aria-labelledby="zones-title">
        <TitleRow>
          <Title id="zones-title">Context Zones</Title>
          <WindowButtons>
            <WindowButton>?</WindowButton>
            <WindowButton $close>x</WindowButton>
          </WindowButtons>
        </TitleRow>
        <DialogBody>
          <DialogBar>
            <ToolButton><Icon name="ok" />OK</ToolButton>
            <ToolButton><Icon name="cancel" />Cancel</ToolButton>
            <Divider />
            <ToolButton><Icon name="add" />Add...</ToolButton>
            <ToolButton><Icon name="edit" />Edit...</ToolButton>
            <ToolButton><Icon name="remove" />Delete</ToolButton>
          </DialogBar>
          <DialogColumns>
            <Box>
              <Scroller $pad="1px 0 0 1px">
                <ZoneTable>
                  <colgroup><col width="20" /><col width="105" /><col width="250" /><col /></colgroup>
                  <thead>
                    <tr><th colSpan={2}>Zone No</th><th>Region</th><th /></tr>
                  </thead>
                  <tbody>
                    <ZoneRow><td /><td>Zone 1</td><td>(-3.278,-0.054):(0.312,0.054)</td><td /></ZoneRow>
                    <ZoneRow $selected><td /><td>Zone 2</td><td>(-1,-0.5):(1,0)</td><td /></ZoneRow>
                  </tbody>
                </ZoneTable>
              </Scroller>
            </Box>
            <Column>
              <Box>
                <Scroller $pad="2px 0 0 1px">
                  <PropTable>
                    <colgroup><col width="21" /><col width="115" /><col /></colgroup>
                    <tbody>
                      {zoneProps.map(([n, v]) => (
                        <tr key={n}>
                          <td />
                          <PropName $lit={n === "Left"}><span>{n}</span></PropName>
                          <PropValue $bold={n !== "Bottom"}>{v}</PropValue>
                        </tr>
                      ))}
                    </tbody>
                  </PropTable>
                </Scroller>
              </Box>
              <Help>
                <p><b>Left</b></p>
                <p><i><b>Type:</b> <u>Double</u>, <b>Default:</b> <u>0</u></i></p>
                <p>The left edge of the rectangle.</p>
              </Help>
            </Column>
          </DialogColumns>
        </DialogBody>
      </Dialog>
    </Shell>
  );
}
